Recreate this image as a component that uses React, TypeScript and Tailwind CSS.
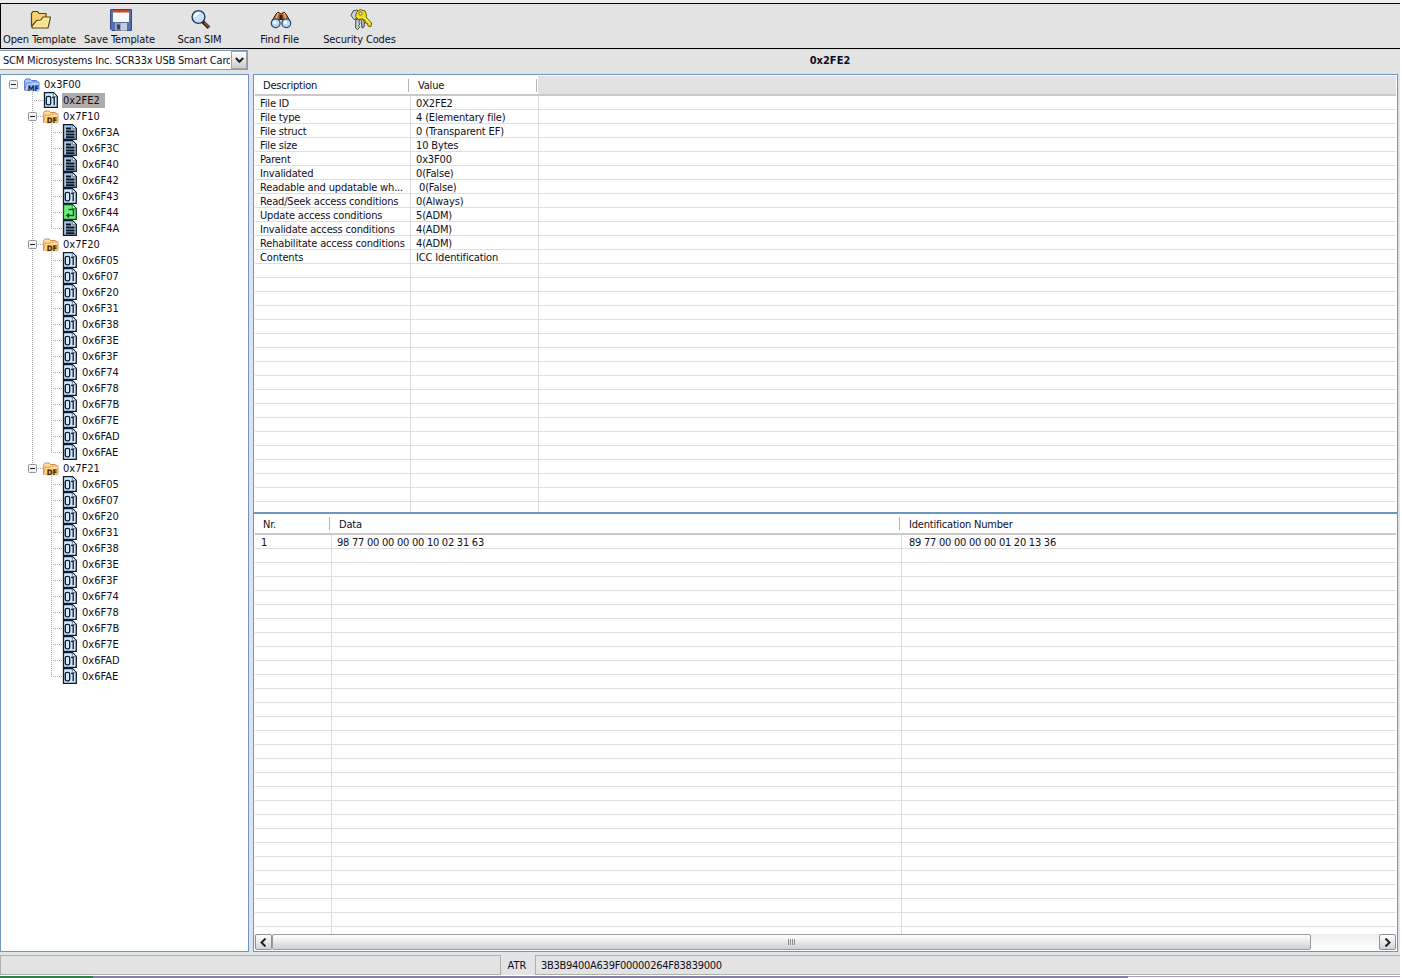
import type { ReactNode } from "react";

type Kind = "mf" | "df" | "bin" | "rec" | "cyc";
type TreeNode = { id: string; level: 0 | 1 | 2; kind: Kind; last?: boolean; under?: boolean; selected?: boolean };

const BIN_IDS = ["0x6F05", "0x6F07", "0x6F20", "0x6F31", "0x6F38", "0x6F3E", "0x6F3F", "0x6F74", "0x6F78", "0x6F7B", "0x6F7E", "0x6FAD", "0x6FAE"];

const binFiles = (under: boolean): TreeNode[] =>
  BIN_IDS.map((id, i) => ({ id, level: 2, kind: "bin", under, last: i === BIN_IDS.length - 1 }));

const NODES: TreeNode[] = [
  { id: "0x3F00", level: 0, kind: "mf" },
  { id: "0x2FE2", level: 1, kind: "bin", selected: true },
  { id: "0x7F10", level: 1, kind: "df" },
  { id: "0x6F3A", level: 2, kind: "rec", under: true },
  { id: "0x6F3C", level: 2, kind: "rec", under: true },
  { id: "0x6F40", level: 2, kind: "rec", under: true },
  { id: "0x6F42", level: 2, kind: "rec", under: true },
  { id: "0x6F43", level: 2, kind: "bin", under: true },
  { id: "0x6F44", level: 2, kind: "cyc", under: true },
  { id: "0x6F4A", level: 2, kind: "rec", under: true, last: true },
  { id: "0x7F20", level: 1, kind: "df" },
  ...binFiles(true),
  { id: "0x7F21", level: 1, kind: "df", last: true },
  ...binFiles(false),
];

const DETAILS: [string, string][] = [
  ["File ID", "0X2FE2"],
  ["File type", "4 (Elementary file)"],
  ["File struct", "0 (Transparent EF)"],
  ["File size", "10 Bytes"],
  ["Parent", "0x3F00"],
  ["Invalidated", "0(False)"],
  ["Readable and updatable wh...", "\u00a00(False)"],
  ["Read/Seek access conditions", "0(Always)"],
  ["Update access conditions", "5(ADM)"],
  ["Invalidate access conditions", "4(ADM)"],
  ["Rehabilitate access conditions", "4(ADM)"],
  ["Contents", "ICC Identification"],
];

function FolderIcon({ kind }: { kind: "mf" | "df" }) {
  const blue = kind === "mf";
  const fill = blue ? "#a9c6fa" : "#ffdc9c";
  const front = blue ? "#c5dafd" : "#ffe9bd";
  const edge = blue ? "#4d7bd0" : "#dc8f3c";
  return (
    <svg width="16" height="16" viewBox="0 0 16 16" className="block shrink-0">
      <path d="M.6 14V4.500L2 3h4l1.500 1.500H12.500L13.500 5.500V8" fill={fill} stroke={edge} />
      <path d="M.6 14.200 2.500 7h5l1-1H15v8.200z" fill={front} stroke={edge} strokeWidth=".9" />
      <rect x="3.500" y="8.500" width="11.500" height="6.800" fill={blue ? "#94b8fb" : "#ffb95a"} />
      <text x="3.800" y="15" fontFamily="DejaVu Sans" fontWeight="700" fontSize="7.500" textLength={blue ? 11.5 : 10.5} lengthAdjust="spacingAndGlyphs" fill={blue ? "#10235e" : "#3c1d00"}>
        {blue ? "MF" : "DF"}
      </text>
    </svg>
  );
}

function FileIcon({ kind }: { kind: "bin" | "rec" | "cyc" }) {
  const fill = kind === "cyc" ? "#6ff07c" : kind === "rec" ? "#a9c4dc" : "#d3eafa";
  return (
    <svg width="16" height="16" viewBox="0 0 16 16" className="block shrink-0">
      <path d="M1.500 .6H10.500L14.300 4.500V15.400H1.500z" fill={fill} stroke={kind === "cyc" ? "#0b4a22" : "#0c1c30"} strokeWidth="1.300" />
      <path d="M10.300 1v3.700H14" fill="#eef7ff" stroke={kind === "cyc" ? "#1c6a30" : "#4c6680"} strokeWidth=".8" />
      {kind === "rec" && <path d="M4 4.500h5M4 7.500h8.500M4 10.500h8.500M4 13.300h8.500" stroke="#08131f" strokeWidth="1.900" />}
      {kind === "bin" && (
        <g fill="none" stroke="#0c1c30" strokeWidth="1.300">
          <rect x="3.300" y="4.300" width="4.400" height="8.600" rx="1.700" />
          <path d="M9 5.300h2.200V13.300" />
        </g>
      )}
      {kind === "cyc" && <path d="M6.500 5.500H11.500V11.500H5M7 9.500l-2.200 2L7 13.500" fill="none" stroke="#07541c" strokeWidth="1.400" />}
    </svg>
  );
}

function Expander() {
  return (
    <svg width="9" height="9" viewBox="0 0 9 9" className="block">
      <rect x=".5" y=".5" width="8" height="8" rx="1" fill="#f4f3ef" stroke="#8d98a5" />
      <path d="M2 4.500h5" stroke="#222" />
    </svg>
  );
}

const V = () => <path d="M.5 0V16" stroke="#aaa" strokeDasharray="1 1" />;

function Guide({ shape }: { shape: "none" | "through" | "tee" | "end" }) {
  return (
    <svg width="19" height="16" viewBox="0 0 19 16" className="block shrink-0">
      {(shape === "through" || shape === "tee") && <V />}
      {shape === "end" && <path d="M.5 0V8" stroke="#aaa" strokeDasharray="1 1" />}
      {(shape === "tee" || shape === "end") && <path d="M0 8.500H11" stroke="#aaa" strokeDasharray="1 1" />}
    </svg>
  );
}

function TreeRow({ node }: { node: TreeNode }) {
  const folder = node.kind === "mf" || node.kind === "df";
  return (
    <div className="flex h-4 items-center">
      {node.level === 0 && (
        <div className="flex w-[23px] pl-2">
          <Expander />
        </div>
      )}
      {node.level > 0 && <div className="w-[31px] shrink-0" />}
      {node.level === 1 && (
        <div className="relative h-4 w-[11px] shrink-0">
          <div className="h-4 w-[11px] overflow-hidden">
            <Guide shape={node.last ? "end" : "tee"} />
          </div>
          {folder && (
            <div className="absolute -left-1 top-1">
              <Expander />
            </div>
          )}
        </div>
      )}
      {node.level === 2 && (
        <>
          <Guide shape={node.under ? "through" : "none"} />
          <div className="w-[11px] overflow-hidden">
            <Guide shape={node.last ? "end" : "tee"} />
          </div>
        </>
      )}
      {folder ? <FolderIcon kind={node.kind as "mf" | "df"} /> : <FileIcon kind={node.kind as "bin" | "rec" | "cyc"} />}
      <span className={node.selected ? "ml-[3px] h-[15px] w-[43px] bg-[#b0abab] pl-px leading-[15px]" : "ml-1 h-4 leading-[17px]"}>{node.id}</span>
    </div>
  );
}

function Tool({ label, children }: { label: string; children: ReactNode }) {
  return (
    <div className="flex w-20 flex-col items-center">
      <div className="flex h-[26px] items-center justify-center">{children}</div>
      <div className="whitespace-nowrap pr-[3px] leading-[13px] tracking-[-0.12px]">{label}</div>
    </div>
  );
}

function Toolbar() {
  return (
    <div className="flex h-[45px] border-b border-l border-black bg-[#e3e3e3] pt-[3px]">
      <Tool label="Open Template">
        <svg width="22" height="22" viewBox="0 0 22 22">
          <path d="M1.500 17.500V4.500L3 2.500H7.500L9 4.500H16V8" fill="#f6d36d" stroke="#5c4212" strokeWidth="1.200" />
          <path d="M2 18.500V17L6.500 11.500 11 11l2-3H20.300V9.500L18 19H2.500z" fill="#fff0ad" stroke="#5c4212" strokeWidth="1.200" />
          <path d="M4.500 17.500 7 13.500l5.500-.5 2-3h4L17 17.500z" fill="#fbe08a" />
        </svg>
      </Tool>
      <Tool label="Save Template">
        <svg width="22" height="22" viewBox="0 0 22 22">
          <path d="M.5 .5h21v21H2L.5 20z" fill="#5271ae" stroke="#344b80" />
          <path d="M3 1h16v12H3z" fill="#f8fafe" />
          <path d="M3 1h16v2.500H3z" fill="#c8472c" />
          <path d="M5 14h12v7.500H5z" fill="#98a3b7" />
          <path d="M11 14h6v7.500h-6z" fill="#c5ccd7" />
          <path d="M7 15.500h3v5H7z" fill="#344564" />
        </svg>
      </Tool>
      <Tool label="Scan SIM">
        <svg width="22" height="22" viewBox="0 0 22 22">
          <path d="M12.500 12.500 19 18.800" stroke="#2d1a10" strokeWidth="3.600" />
          <path d="M14 13.500 19 18.300" stroke="#9b5a2b" strokeWidth="1.500" />
          <circle cx="8.500" cy="8" r="6.400" fill="#c9e2fc" stroke="#223b63" strokeWidth="1.400" />
          <path d="M5 8a3.500 3.500 0 0 1 4-3.500" fill="none" stroke="#fff" strokeWidth="2" />
        </svg>
      </Tool>
      <Tool label="Find File">
        <svg width="22" height="22" viewBox="0 0 22 22">
          <path d="M2 12 6 5l2-2 3 2 3-2 2 2 4 7-6 1-3-4-3 4z" fill="#bd672c" stroke="#3c2010" />
          <path d="m8 4-2 6M14 4l2 6" stroke="#f3b35f" strokeWidth="1.500" />
          <rect x="9.500" y="6" width="3" height="5" fill="#28202a" />
          <circle cx="5.700" cy="14.300" r="4.400" fill="#b9d8f7" stroke="#2d476e" strokeWidth="1.200" />
          <circle cx="16.300" cy="14.300" r="4.400" fill="#b9d8f7" stroke="#2d476e" strokeWidth="1.200" />
          <circle cx="5" cy="13.500" r="1.700" fill="#fff" />
          <circle cx="15.500" cy="13.500" r="1.700" fill="#fff" />
        </svg>
      </Tool>
      <Tool label="Security Codes">
        <svg width="24" height="24" viewBox="0 0 24 24">
          <path d="M7 10 6.500 20l2 1.500 2-2-1-2 1.500-1.500-1-1.500.5-5zM4 3l4-1 4 4-2 5-5 .5-3-4z" fill="#cbd0d4" stroke="#424950" />
          <path d="m12 11 1 9 2-1 .5-4-1-4z" fill="#b6bdc4" stroke="#424950" />
          <path d="M7.500 4.500 11 1.500l5 1.500 1.500 4-.5 2 5.500 6-.5 3.500-3-.5-.5-2.500-2-.5-.5-2.500-2.500-1.500-4 .5-3-3z" fill="#efdf21" stroke="#625a0a" />
          <circle cx="11.500" cy="5.500" r="1.600" fill="#f7f7de" stroke="#625a0a" />
          <path d="m15.500 9 5.500 6" stroke="#fff889" />
        </svg>
      </Tool>
    </div>
  );
}

function HeaderCell({ label, className }: { label: string; className: string }) {
  return (
    <div className={className}>
      <span className="grow pt-[3px]">{label}</span>
      <span className="h-[13px] w-px bg-[#b5b5b5]" />
    </div>
  );
}

function DetailsTable() {
  return (
    <div className="flex h-[437px] shrink-0 flex-col overflow-hidden pl-px">
      <div className="mt-px flex h-[20px] shrink-0 border-b-2 border-[#c9c9c9] tracking-[-0.2px]">
        <HeaderCell label="Description" className="flex w-[154px] items-center pl-2" />
        <HeaderCell label="Value" className="flex w-32 items-center pl-[9px]" />
        <div className="ml-px grow bg-[#e2e2e2]" />
      </div>
      {Array.from({ length: 30 }, (_, i) => (
        <div key={i} className="flex h-3.5 shrink-0 border-b border-[#dedede] leading-[15px]">
          <div className="w-[156px] whitespace-nowrap border-r border-[#dedede] pl-[5px] tracking-[-0.17px]">{DETAILS[i]?.[0]}</div>
          <div className="w-32 whitespace-nowrap border-r border-[#dedede] pl-[5px] tracking-[-0.15px]">{DETAILS[i]?.[1]}</div>
        </div>
      ))}
    </div>
  );
}

const ROWS = [["1", "98 77 00 00 00 00 10 02 31 63", "89 77 00 00 00 00 01 20 13 36"]];

function DataTable() {
  return (
    <div className="flex h-[420px] shrink-0 flex-col overflow-hidden pl-px">
      <div className="flex h-[21px] shrink-0 border-b-2 border-[#c9c9c9] tracking-[-0.2px]">
        <HeaderCell label="Nr." className="flex w-[75px] items-center pl-2" />
        <HeaderCell label="Data" className="flex w-[570px] items-center pl-[9px]" />
        <div className="flex grow items-center pl-[9px] pt-[3px]">Identification Number</div>
      </div>
      {Array.from({ length: 29 }, (_, i) => (
        <div key={i} className="flex h-3.5 shrink-0 border-b border-[#dedede] leading-[15px]">
          <div className="w-[77px] border-r border-[#dedede] pl-1.5">{ROWS[i]?.[0]}</div>
          <div className="w-[570px] whitespace-nowrap border-r border-[#dedede] pl-[5px] tracking-[-0.25px]">{ROWS[i]?.[1]}</div>
          <div className="whitespace-nowrap pl-[7px] tracking-[-0.25px]">{ROWS[i]?.[2]}</div>
        </div>
      ))}
    </div>
  );
}

function ScrollButton({ d }: { d: string }) {
  return (
    <div className="flex h-4 w-[17px] shrink-0 items-center justify-center rounded-[2px] border border-[#8f8f98] bg-linear-to-b from-white to-[#d2d2d8]">
      <svg width="9" height="9" viewBox="0 0 9 9">
        <path d={d} fill="none" stroke="#222" strokeWidth="2" />
      </svg>
    </div>
  );
}

function ScrollBar() {
  return (
    <div className="flex h-4 shrink-0 bg-linear-to-b from-[#eeeeee] to-white pl-px">
      <ScrollButton d="M6.500 .5 2.500 4.500 6.500 8.500" />
      <div className="flex w-[1039px] items-center justify-center gap-px rounded-[2px] border border-[#9a9aa2] bg-linear-to-b from-white via-[#e8e8e8] to-[#cfcfd6]">
        {[0, 1, 2, 3].map((i) => (
          <span key={i} className="h-1.5 w-px bg-[#8c8c8c]" />
        ))}
      </div>
      <div className="grow" />
      <ScrollButton d="M2.500 .5 6.500 4.500 2.500 8.500" />
    </div>
  );
}

export default function App() {
  return (
    <div className="h-[978px] w-[1402px] overflow-hidden bg-white font-['DejaVu_Sans_Condensed','DejaVu_Sans',sans-serif] text-[11px] text-[#0e0e1e] [font-stretch:condensed]">
      <div className="flex h-[978px] w-[1400px] flex-col bg-[#e3e3e3]">
        <div className="h-[3px] bg-[#ececec]" />
        <div className="h-px bg-black" />
        <Toolbar />
        <div className="flex h-[25px]">
          <div className="mt-px flex h-5 w-[248px] shrink-0 border border-l-0 border-[#7f9db9] bg-white">
            <div className="w-[230px] shrink-0 overflow-hidden whitespace-nowrap pl-[3px] leading-[19px] tracking-[-0.2px]">SCM Microsystems Inc. SCR33x USB Smart Card</div>
            <div className="ml-px flex h-[18px] w-4 shrink-0 items-center justify-center border border-[#9aa5b4] bg-linear-to-b from-white to-[#cccccf]">
              <svg width="9" height="7" viewBox="0 0 9 7">
                <path d="m.8 1 3.700 3.800L8.200 1" fill="none" stroke="#222" strokeWidth="2" />
              </svg>
            </div>
          </div>
          <div className="grow pl-3 pt-1 text-center font-bold leading-4">0x2FE2</div>
        </div>
        <div className="flex h-[878px] gap-1 bg-[#dbe4ec]">
          <div className="w-[249px] shrink-0 border border-[#7094bd] bg-white pt-px">
            {NODES.map((node, i) => (
              <TreeRow key={i} node={node} />
            ))}
          </div>
          <div className="flex w-[1145px] flex-col border border-[#7094bd] bg-white pr-px">
            <DetailsTable />
            <div className="-mr-px h-0.5 shrink-0 bg-[#6c94c6]" />
            <DataTable />
            <ScrollBar />
          </div>
        </div>
        <div className="h-[3px] shrink-0 bg-[#dfe6e8]" />
        <div className="flex h-5 shrink-0">
          <div className="w-[501px] border border-[#adb0a8]" />
          <div className="w-[34px] pr-0.5 text-center leading-[21px]">ATR</div>
          <div className="grow border border-r-0 border-[#adb0a8] pl-[5px] leading-[19px] tracking-[-0.28px]">3B3B9400A639F00000264F83839000</div>
        </div>
        <div className="h-px shrink-0 bg-white" />
        <div className="flex h-0.5 shrink-0">
          <div className="w-[93px] bg-[#2f7d4a]" />
          <div className="w-[1035px] bg-[#85809e]" />
          <div className="grow bg-linear-to-b from-[#a59cc0] from-50% to-white to-50%" />
        </div>
      </div>
    </div>
  );
}
